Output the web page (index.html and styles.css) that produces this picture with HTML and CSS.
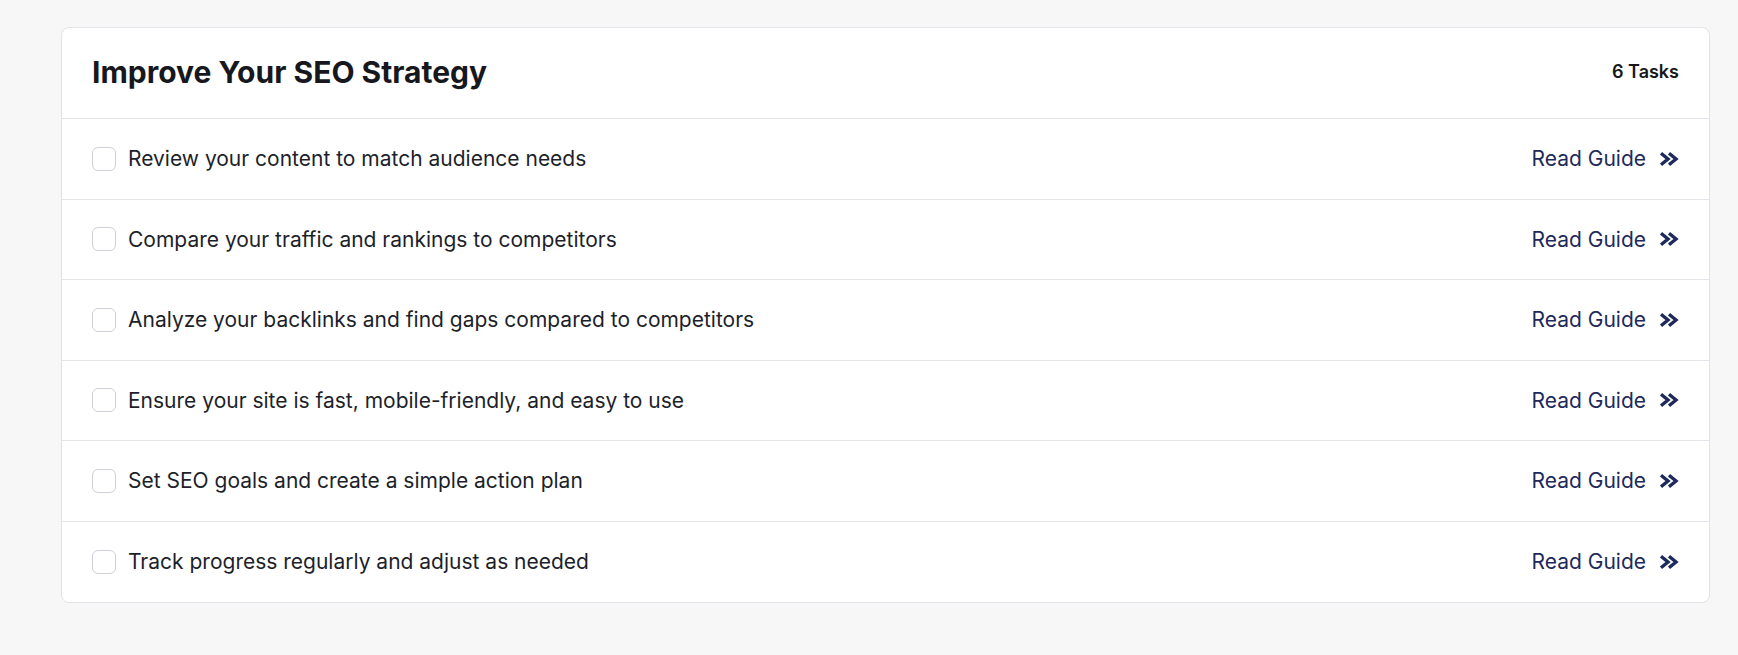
FILE: index.html
```html
<!DOCTYPE html>
<html lang="en">
<head>
<meta charset="utf-8">
<title>Improve Your SEO Strategy</title>
<link rel="stylesheet" href="styles.css">
</head>
<body>
<section class="card">
  <header class="card-head">
    <h2 class="title">Improve Your SEO Strategy</h2>
    <span class="count">6 Tasks</span>
  </header>
  <ul class="tasks">
    <li class="task"><label class="task-label"><span class="box"></span><span class="task-text">Review your content to match audience needs</span></label><a class="guide" href="#">Read Guide<svg class="chev" viewBox="0 0 20 16" width="20" height="16"><path d="M2 2.2l7 5.8-7 5.8M10 2.2l7 5.8-7 5.8"/></svg></a></li>
    <li class="task"><label class="task-label"><span class="box"></span><span class="task-text">Compare your traffic and rankings to competitors</span></label><a class="guide" href="#">Read Guide<svg class="chev" viewBox="0 0 20 16" width="20" height="16"><path d="M2 2.2l7 5.8-7 5.8M10 2.2l7 5.8-7 5.8"/></svg></a></li>
    <li class="task"><label class="task-label"><span class="box"></span><span class="task-text">Analyze your backlinks and find gaps compared to competitors</span></label><a class="guide" href="#">Read Guide<svg class="chev" viewBox="0 0 20 16" width="20" height="16"><path d="M2 2.2l7 5.8-7 5.8M10 2.2l7 5.8-7 5.8"/></svg></a></li>
    <li class="task"><label class="task-label"><span class="box"></span><span class="task-text">Ensure your site is fast, mobile-friendly, and easy to use</span></label><a class="guide" href="#">Read Guide<svg class="chev" viewBox="0 0 20 16" width="20" height="16"><path d="M2 2.2l7 5.8-7 5.8M10 2.2l7 5.8-7 5.8"/></svg></a></li>
    <li class="task"><label class="task-label"><span class="box"></span><span class="task-text">Set SEO goals and create a simple action plan</span></label><a class="guide" href="#">Read Guide<svg class="chev" viewBox="0 0 20 16" width="20" height="16"><path d="M2 2.2l7 5.8-7 5.8M10 2.2l7 5.8-7 5.8"/></svg></a></li>
    <li class="task"><label class="task-label"><span class="box"></span><span class="task-text">Track progress regularly and adjust as needed</span></label><a class="guide" href="#">Read Guide<svg class="chev" viewBox="0 0 20 16" width="20" height="16"><path d="M2 2.2l7 5.8-7 5.8M10 2.2l7 5.8-7 5.8"/></svg></a></li>
  </ul>
</section>
</body>
</html>
```
FILE: styles.css
```css
* { box-sizing: border-box; }
html, body { margin: 0; padding: 0; }
body {
  background: #f7f7f7;
  font-family: Inter, "Noto Sans", sans-serif;
  color: #1b1c22;
  padding: 27px 28px 0 61px;
}
.card {
  background: #ffffff;
  border: 1px solid #e2e2e8;
  border-radius: 8px;
  width: 1649px;
}
.card-head {
  display: flex;
  align-items: center;
  justify-content: space-between;
  height: 91px;
  padding: 0 30px 3px;
  border-bottom: 1px solid #e2e2e8;
}
.title {
  margin: 0;
  font-size: 30px;
  font-weight: 700;
  color: #17181d;
}
.count {
  font-size: 18px;
  font-weight: 600;
  color: #17181d;
}
.tasks {
  list-style: none;
  margin: 0;
  padding: 0;
}
.task {
  display: flex;
  align-items: center;
  justify-content: space-between;
  height: 80.5px;
  padding: 0 30px;
  border-bottom: 1px solid #e4e4ea;
}
.task:last-child { border-bottom: none; }
.task-label {
  display: flex;
  align-items: center;
  gap: 12px;
}
.box {
  width: 24px;
  height: 24px;
  border: 1px solid #cfd0d8;
  border-radius: 6px;
  background: #fff;
}
.task-text {
  font-size: 21px;
  color: #1d1f2a;
}
.guide {
  display: flex;
  align-items: center;
  gap: 13px;
  font-size: 21px;
  color: #1e2a5c;
  text-decoration: none;
}
.chev {
  fill: none;
  stroke: #1e2a5c;
  stroke-width: 3.4;
  stroke-linecap: butt;
  stroke-linejoin: miter;
}
```
